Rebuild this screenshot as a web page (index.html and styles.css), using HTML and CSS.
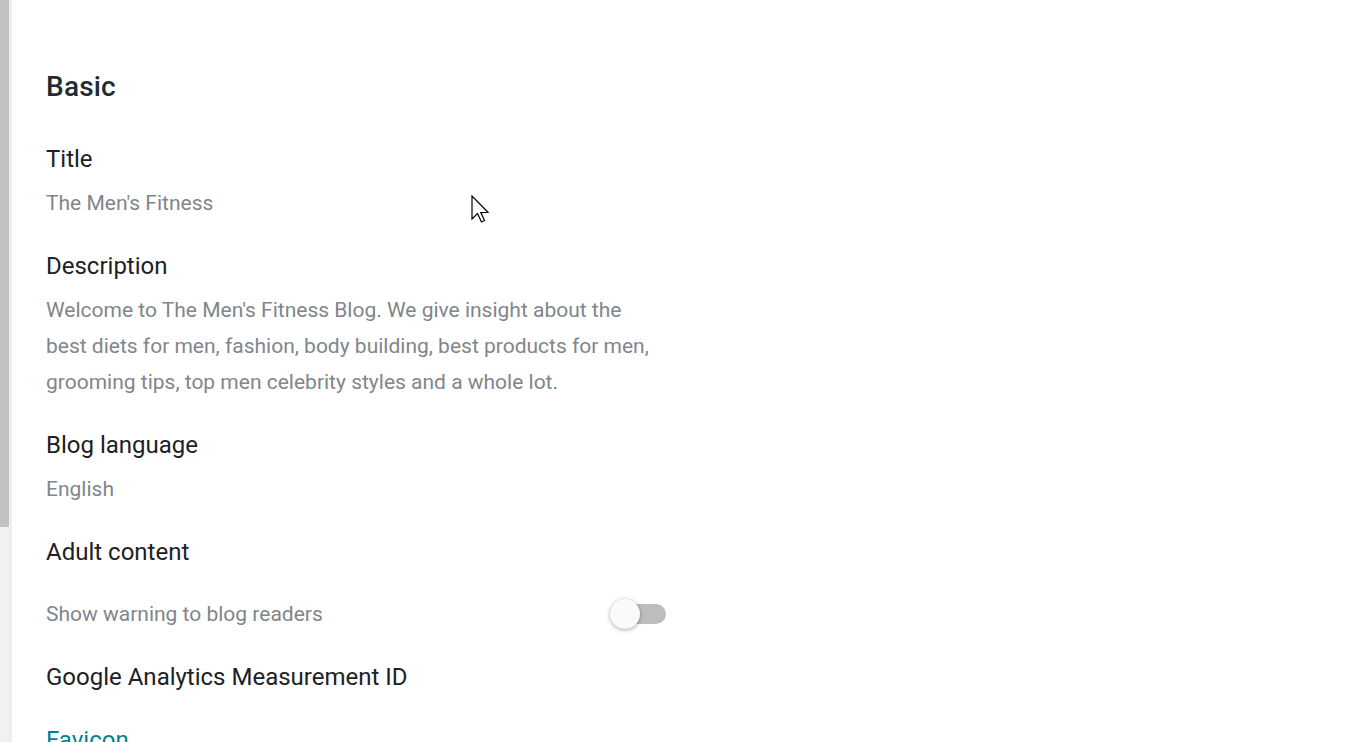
FILE: index.html
```html
<!DOCTYPE html>
<html>
<head>
<meta charset="utf-8">
<link rel="stylesheet" href="styles.css">
</head>
<body>
<div class="page">
  <div class="scrollbar"><div class="thumb"></div></div>
  <div class="edge"></div>
  <main class="content">
    <h2 class="section-title">Basic</h2>
    <div class="field">
      <div class="label">Title</div>
      <div class="value">The Men's Fitness</div>
    </div>
    <div class="field">
      <div class="label">Description</div>
      <div class="value multi">Welcome to The Men's Fitness Blog. We give insight about the best diets for men, fashion, body building, best products for men, grooming tips, top men celebrity styles and a whole lot.</div>
    </div>
    <div class="field">
      <div class="label">Blog language</div>
      <div class="value">English</div>
    </div>
    <div class="field">
      <div class="label">Adult content</div>
      <div class="toggle-row">
        <div class="value">Show warning to blog readers</div>
        <div class="switch"><div class="track"></div><div class="knob"></div></div>
      </div>
    </div>
    <div class="field tight">
      <div class="label">Google Analytics Measurement ID</div>
    </div>
    <div class="field">
      <div class="label link">Favicon</div>
    </div>
  </main>
</div>
<svg class="cursor" width="20" height="30" viewBox="0 0 20 30">
  <path d="M1 1 L1 24 L6.5 18.5 L10.5 27 L13.5 25.5 L9.8 17.6 L17 17.3 Z" fill="#fff" stroke="#000" stroke-width="1.2" stroke-linejoin="miter"/>
</svg>
</body>
</html>
```
FILE: styles.css
```css
html, body {
  margin: 0;
  padding: 0;
  background: #fff;
  height: 100%;
  overflow: hidden;
}
body {
  font-family: Roboto, "Noto Sans", Arial, sans-serif;
}
.page {
  display: flex;
  height: 742px;
  position: relative;
}
.scrollbar {
  width: 10px;
  background: #f1f1f1;
  flex: none;
}
.thumb {
  width: 9px;
  height: 527px;
  background: #c1c1c1;
}
.edge {
  width: 2px;
  flex: none;
  background: linear-gradient(to right, #e6e6e6, #f4f4f4);
}
.content {
  padding: 69px 0 0 34px;
  flex: 1;
}
.section-title {
  margin: 0 0 38px 0;
  font-size: 28px;
  font-weight: 500;
  color: #202b33;
  line-height: 36px;
  letter-spacing: 0.2px;
}
.field {
  margin-bottom: 29px;
}
.field.tight {
  margin-bottom: 31px;
}
.label {
  font-size: 24px;
  line-height: 32px;
  color: #202124;
  margin-bottom: 10px;
}
.label.link {
  color: #00838f;
}
.value {
  font-size: 21px;
  line-height: 36px;
  color: #80868b;
}
.value.multi {
  width: 612px;
}
.toggle-row {
  display: flex;
  align-items: center;
  justify-content: space-between;
  width: 620px;
  margin-top: 28px;
  height: 36px;
}
.switch {
  position: relative;
  width: 56px;
  height: 30px;
}
.track {
  position: absolute;
  left: 3px;
  right: 0;
  top: 5px;
  height: 20px;
  border-radius: 10px;
  background: #bdbdbd;
}
.knob {
  position: absolute;
  left: 0;
  top: 0;
  width: 30px;
  height: 30px;
  border-radius: 50%;
  background: #fafafa;
  box-shadow: 0 1px 4px rgba(0,0,0,0.35);
}
.cursor {
  position: absolute;
  left: 471px;
  top: 195px;
}
```
